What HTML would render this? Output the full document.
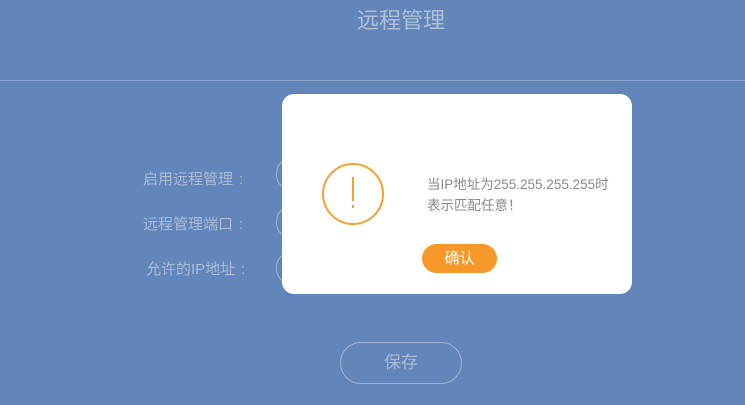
<!DOCTYPE html>
<html><head><meta charset="utf-8"><style>
body{margin:0;width:745px;height:405px;background:#6285ba;position:relative;overflow:hidden;font-family:"Liberation Sans","Noto Sans CJK SC",sans-serif}
.t{position:absolute;left:0;width:802px;top:3px;text-align:center;font-size:22px;color:#aebfd9}
.line{position:absolute;left:0;right:0;top:80px;height:1px;background:#8aa3cb}
.lab{position:absolute;left:143px;font-size:15px;color:#a9bbd7}
.lab span{margin-left:6px}
.inp{position:absolute;left:276px;width:200px;height:30px;border:1px solid #9fb3d3;border-radius:15px}
.save{position:absolute;left:340px;top:342px;width:120px;height:40px;border:1px solid #9fb3d3;border-radius:21px;color:#a9bbd7;font-size:17px;text-align:center;line-height:40px}
.dlg{position:absolute;left:282px;top:94px;width:350px;height:200px;background:#fff;border-radius:12px}
.circ{position:absolute;left:40px;top:69px;width:58px;height:58px;border:2px solid #f5a033;border-radius:50%}
.ex{position:absolute;left:28px;top:12px;width:2px;height:24px;background:#f5a033}
.dot{position:absolute;left:28px;top:40px;width:2px;height:3px;background:#f5a033}
.msg{position:absolute;left:145px;top:80px;font-size:13.5px;line-height:21px;color:#888}
.ok{position:absolute;left:140px;top:150px;width:75px;height:29px;background:#f7982a;border-radius:15px;color:#fff;font-size:15px;text-align:center;line-height:29px}
</style></head><body>
<div class="t">远程管理</div>
<div class="line"></div>
<div class="lab" style="top:168px">启用远程管理<span>:</span></div>
<div class="lab" style="top:213px">远程管理端口<span>:</span></div>
<div class="lab" style="top:258px;left:146px">允许的IP地址<span>:</span></div>
<div class="inp" style="top:158px"></div>
<div class="inp" style="top:206px"></div>
<div class="inp" style="top:252px"></div>
<div class="save">保存</div>
<div class="dlg">
<div class="circ"><div class="ex"></div><div class="dot"></div></div>
<div class="msg">当IP地址为255.255.255.255时<br>表示匹配任意！</div>
<div class="ok">确认</div>
</div>
</body></html>
